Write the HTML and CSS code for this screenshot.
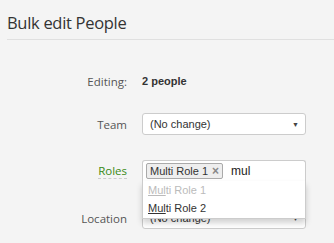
FILE: index.html
```html
<!DOCTYPE html>
<html lang="en">
<head>
    <meta charset="UTF-8">
    <title>Bulk edit People</title>
    <link rel="stylesheet" href="styles.css">
</head>
<body>
    <div class="page">
        <h1 class="title">Bulk edit People</h1>

        <form class="form">
            <div class="row row-info">
                <label class="label">Editing:</label>
                <div class="value"><strong>2 people</strong></div>
            </div>

            <div class="row">
                <label class="label">Team</label>
                <div class="select">
                    <span>(No change)</span>
                    <span class="arrow">▼</span>
                </div>
            </div>

            <div class="row">
                <label class="label label-changed">Roles</label>
                <div class="multi">
                    <div class="multi-input">
                        <span class="tag">Multi Role 1<span class="tag-x">×</span></span>
                        <span class="typed">mul</span>
                    </div>
                    <ul class="dropdown">
                        <li class="option disabled"><u>Mul</u>ti Role 1</li>
                        <li class="option"><u>Mul</u>ti Role 2</li>
                    </ul>
                </div>
            </div>

            <div class="row">
                <label class="label">Location</label>
                <div class="select">
                    <span>(No change)</span>
                    <span class="arrow">▼</span>
                </div>
            </div>
        </form>
    </div>
</body>
</html>
```

FILE: styles.css
```css
* {
    margin: 0;
    padding: 0;
    box-sizing: border-box;
}

body {
    background: #f4f4f4;
    font-family: 'Open Sans', sans-serif;
    color: #333;
    overflow: hidden;
}

.page {
    padding: 0 0 0 7px;
}

.title {
    font-size: 16.5px;
    font-weight: 400;
    letter-spacing: -0.3px;
    color: #333;
    padding-top: 13px;
    height: 40px;
    line-height: 20px;
    border-bottom: 1px solid #e0e0e0;
}

.form {
    padding-top: 30px;
}

.row {
    display: grid;
    grid-template-columns: 120px 164px;
    column-gap: 15px;
    align-items: center;
    height: 22px;
    margin-bottom: 25px;
}

.row-info {
    margin-bottom: 21px;
}

.label {
    text-align: right;
    font-size: 11.5px;
    color: #555;
}

.label-changed {
    color: #3a8a14;
    justify-self: end;
    border-bottom: 1px dashed #ccc;
    line-height: 15px;
}

.value {
    font-family: 'Liberation Sans', Arial, sans-serif;
    font-size: 11px;
    color: #333;
}

.select {
    height: 22px;
    background: #fff;
    border: 1px solid #ccc;
    border-radius: 3px;
    display: flex;
    justify-content: space-between;
    align-items: center;
    padding: 0 6px 0 7px;
    font-family: 'Liberation Sans', Arial, sans-serif;
    font-size: 11px;
    color: #333;
}

.arrow {
    font-size: 7px;
    color: #444;
}

.multi {
    position: relative;
    height: 22px;
}

.multi-input {
    height: 22px;
    background: #fff;
    border: 1px solid #ccc;
    border-bottom-color: #eee;
    border-radius: 3px 3px 0 0;
    display: flex;
    align-items: center;
    gap: 8px;
    padding: 0 3px;
    font-family: 'Liberation Sans', Arial, sans-serif;
    font-size: 11px;
}

.tag {
    background: #eee;
    border: 1px solid #aaa;
    border-radius: 2px;
    padding: 0 3px;
    line-height: 14px;
    color: #333;
}

.tag-x {
    color: #888;
    font-weight: bold;
    font-size: 12px;
    margin-left: 4px;
}

.typed {
    color: #222;
    font-size: 12px;
}

.dropdown {
    position: absolute;
    top: 21px;
    left: 0;
    right: 0;
    z-index: 2;
    list-style: none;
    background: #fff;
    border: 1px solid #ccc;
    border-top: none;
    box-shadow: 0 4px 6px rgba(0, 0, 0, 0.18);
    padding: 0 0 1px;
    font-family: 'Liberation Sans', Arial, sans-serif;
    font-size: 11px;
}

.option {
    padding: 3px 5px;
    line-height: 12px;
    color: #333;
}

.option.disabled {
    color: #bbb;
}
```
